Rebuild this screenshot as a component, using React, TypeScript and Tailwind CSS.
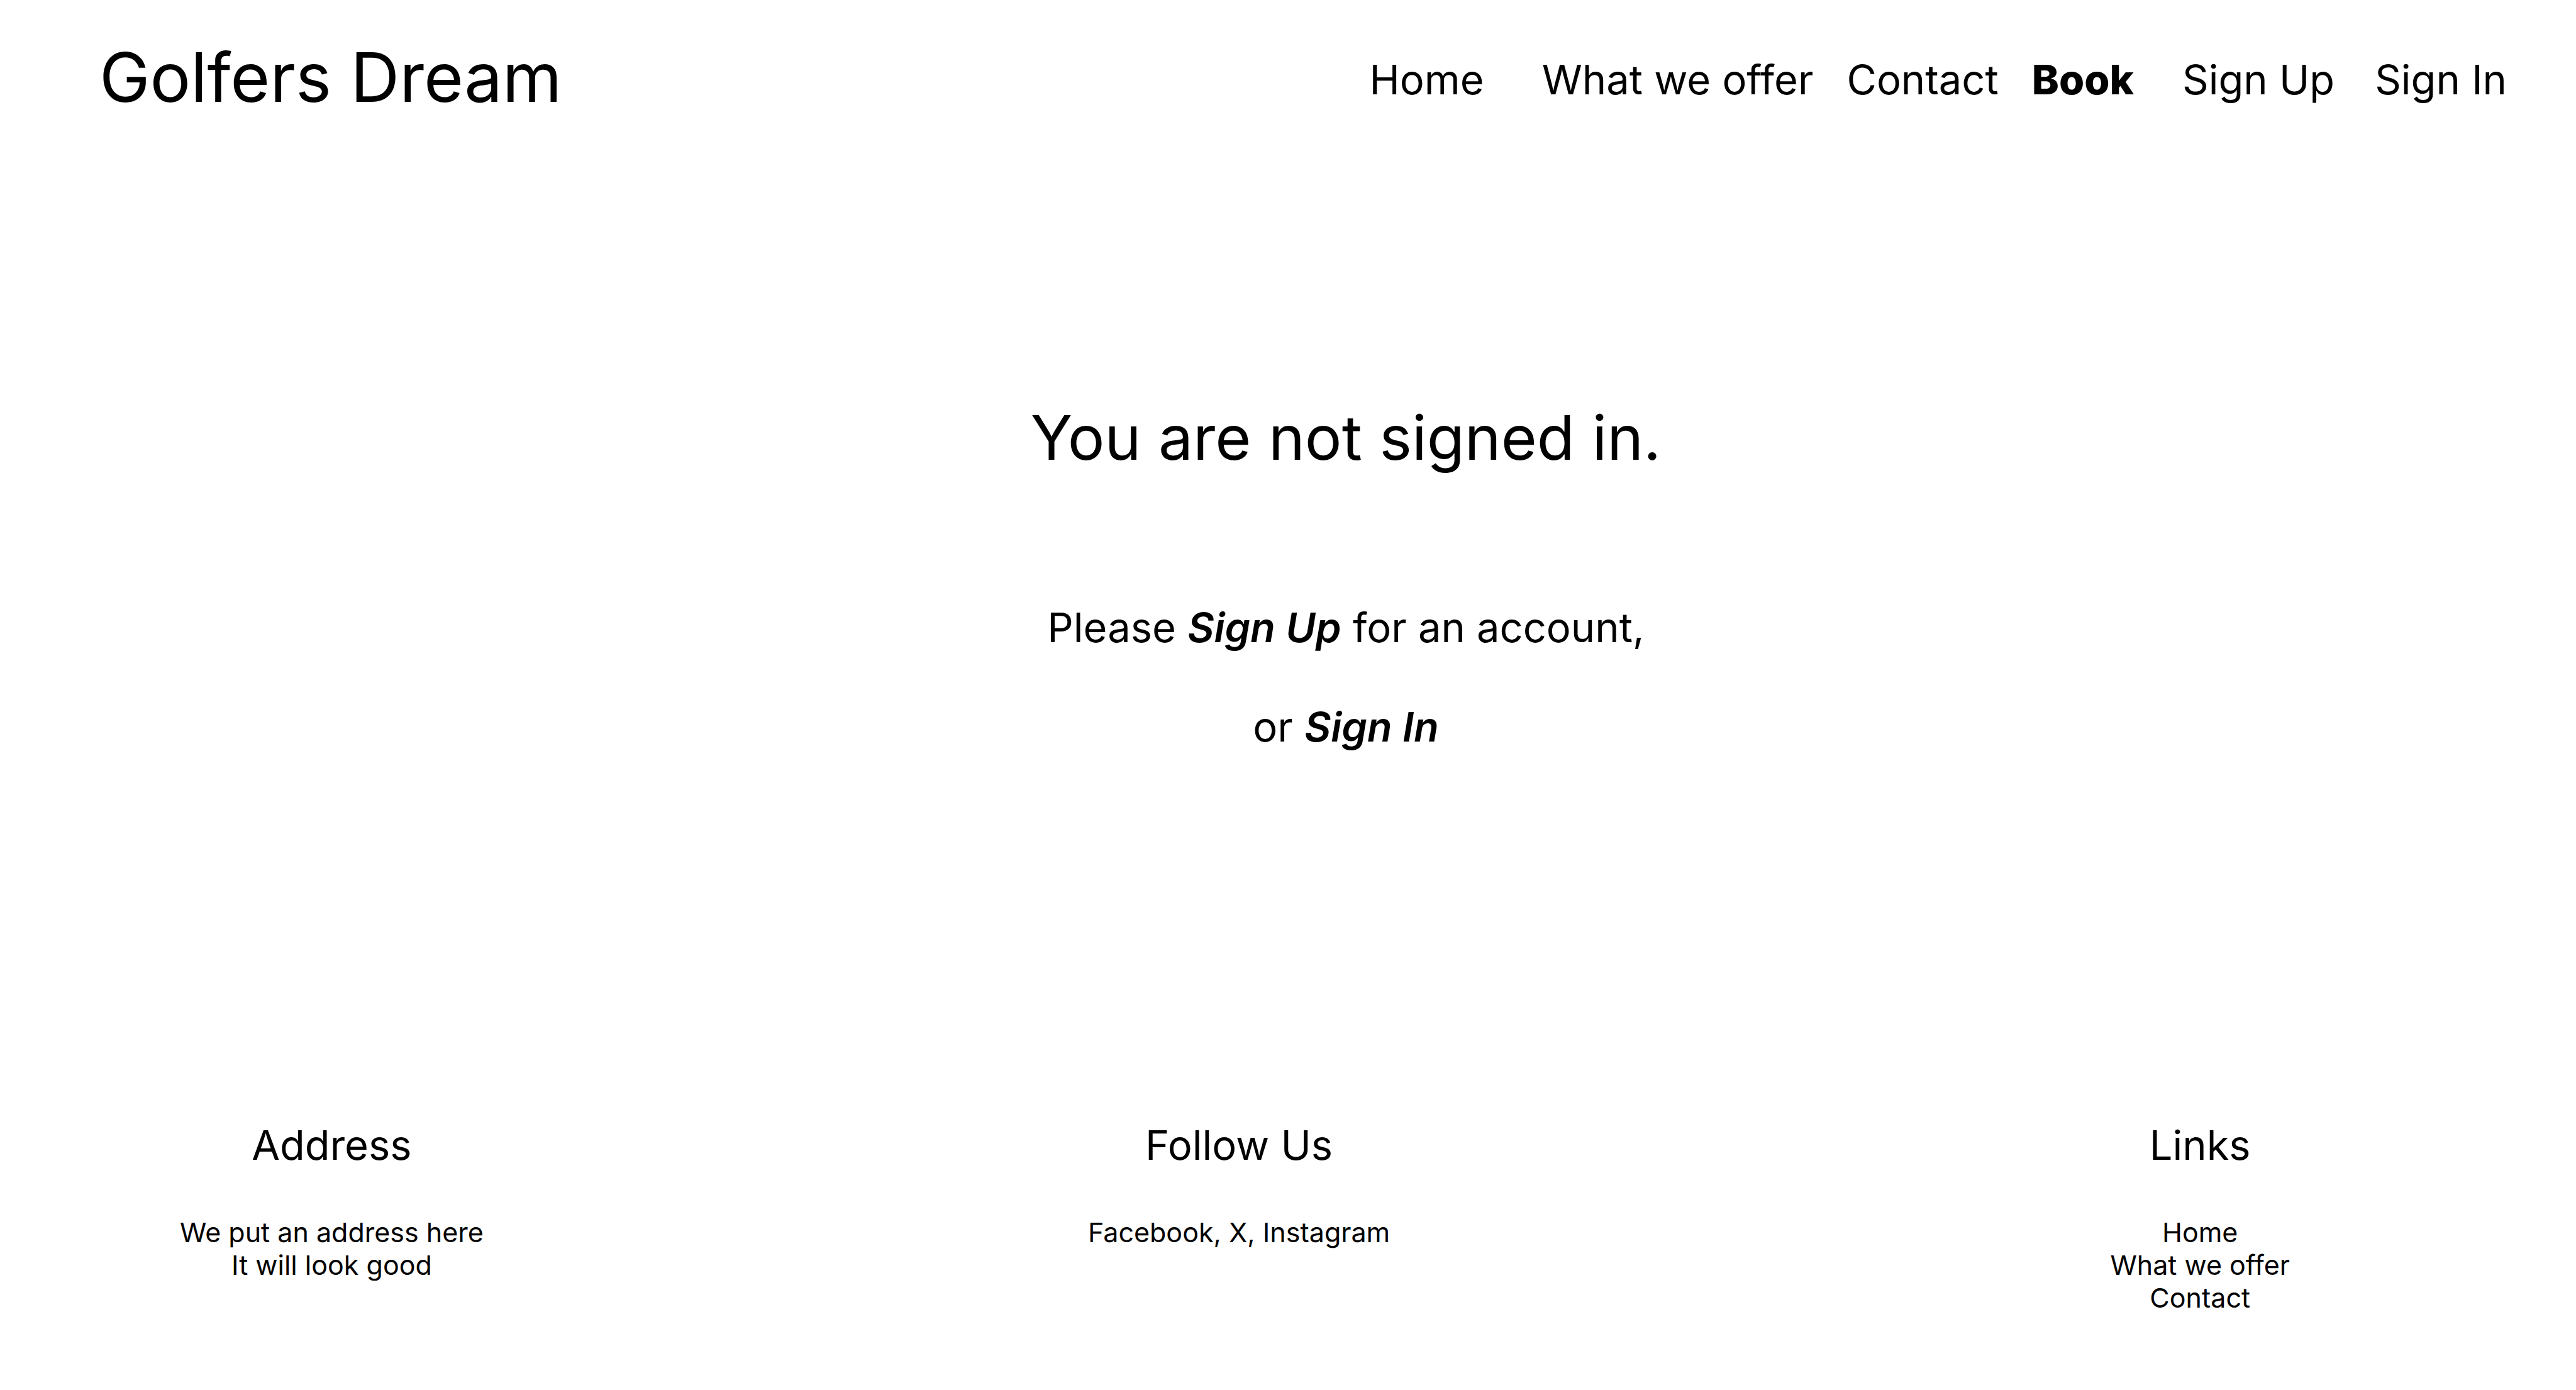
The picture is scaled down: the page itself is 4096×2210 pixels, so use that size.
import type { ReactNode } from "react";

type FooterColumnProps = {
  title: string;
  className?: string;
  children: ReactNode;
};

function FooterColumn({ title, className = "", children }: FooterColumnProps) {
  return (
    <section className={`flex flex-col items-center text-center ${className}`}>
      <h2 className="text-[65px] leading-[80px]">{title}</h2>
      <div className="mt-[72px] text-[43px] leading-[52px]">{children}</div>
    </section>
  );
}

export default function App() {
  return (
    <div className="flex min-h-screen flex-col bg-white font-['Inter',sans-serif] text-black">
      <header className="flex items-center justify-between pt-14 pr-[110px] pl-[158px]">
        <a href="#home" className="text-[108px] leading-[134px] whitespace-nowrap">
          Golfers Dream
        </a>
        <nav className="flex items-center pt-2 text-[65px] leading-[80px] whitespace-nowrap">
          <a href="#home">Home</a>
          <a href="#offer" className="ml-[92px]">What we offer</a>
          <a href="#contact" className="ml-[53px]">Contact</a>
          <a href="#book" aria-current="page" className="ml-[53px] font-extrabold">Book</a>
          <a href="#signup" className="ml-[77px]">Sign Up</a>
          <a href="#signin" className="ml-[64px]">Sign In</a>
        </nav>
      </header>
      <main className="flex flex-col items-center pt-[446px] pl-[184px] text-center">
        <h1 className="text-[98px] leading-[120px]">You are not signed in.</h1>
        <p className="mt-[202px] text-[65px] leading-[80px]">
          Please <a href="#signup" className="font-semibold italic">Sign Up</a> for an account,
        </p>
        <p className="mt-[78px] text-[65px] leading-[80px]">
          or <a href="#signin" className="font-semibold italic">Sign In</a>
        </p>
      </main>
      <footer className="mt-auto flex justify-between pr-[455px] pb-[121px] pl-[286px]">
        <FooterColumn title="Address">
          <p>We put an address here</p>
          <p>It will look good</p>
        </FooterColumn>
        <FooterColumn title="Follow Us" className="mr-[184px]">
          <p>Facebook, X, Instagram</p>
        </FooterColumn>
        <FooterColumn title="Links">
          <a href="#home" className="block">Home</a>
          <a href="#offer" className="block">What we offer</a>
          <a href="#contact" className="block">Contact</a>
        </FooterColumn>
      </footer>
    </div>
  );
}
